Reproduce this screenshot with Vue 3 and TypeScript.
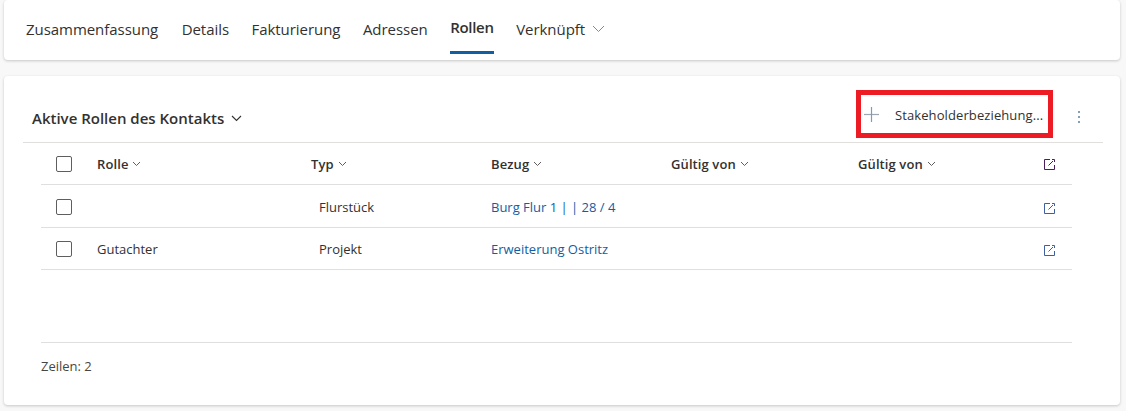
<template>
  <div class="page">
    <nav class="tabs card">
      <a v-for="tab in tabs" :key="tab" class="tab" :class="{ 'tab--active': tab === 'Rollen' }">
        {{ tab }}
        <svg v-if="tab === 'Verknüpft'" class="tab__chevron" width="13" height="8" viewBox="0 0 13 8">
          <path d="M1 1l5.5 5.5L12 1" fill="none" stroke="#6b8fb5" stroke-width="1" />
        </svg>
      </a>
    </nav>

    <section class="panel card">
      <header class="panel__head">
        <h2 class="panel__title">
          Aktive Rollen des Kontakts
          <svg width="11" height="7" viewBox="0 0 11 7">
            <path d="M1 1l4.5 4.5L10 1" fill="none" stroke="#323130" stroke-width="1.1" />
          </svg>
        </h2>
        <button class="add">
          <svg class="add__icon" width="15" height="15" viewBox="0 0 15 15">
            <path d="M0 7.5h15" fill="none" stroke="#a0a6ad" stroke-width="1.2" />
            <path d="M7.5 0v15" fill="none" stroke="#6f9fd0" stroke-width="1.2" />
          </svg>
          <span>Stakeholderbeziehung...</span>
        </button>
        <svg class="more" width="4" height="14" viewBox="0 0 4 14">
          <circle cx="2" cy="2" r="1" fill="#5c7f9f" />
          <circle cx="2" cy="7" r="1" fill="#5c7f9f" />
          <circle cx="2" cy="12" r="1" fill="#5c7f9f" />
        </svg>
      </header>

      <div class="table">
        <div class="row row--head">
          <span class="check"></span>
          <span v-for="col in columns" :key="col" class="col">
            {{ col }}
            <svg width="9" height="6" viewBox="0 0 9 6">
              <path d="M1 1l3.5 3.5L8 1" fill="none" stroke="#605e5c" stroke-width="1" />
            </svg>
          </span>
          <svg class="open" width="11" height="11" viewBox="0 0 11 11">
            <path d="M6 .5H.5v10h10V6M8 .5h2.5V3M9 2L4.5 6.5" fill="none" stroke="#4b1d5e" stroke-width="1" />
          </svg>
        </div>
        <div v-for="row in rows" :key="row.ref" class="row row--data">
          <span class="check"></span>
          <span>{{ row.role }}</span>
          <span class="type">{{ row.type }}</span>
          <a class="link">{{ row.ref }}</a>
          <span></span>
          <span></span>
          <svg class="open" width="11" height="11" viewBox="0 0 11 11">
            <path d="M6 .5H.5v10h10V6M8 .5h2.5V3M9 2L4.5 6.5" fill="none" stroke="#3f5f9f" stroke-width="1" />
          </svg>
        </div>
      </div>

      <footer class="panel__foot">Zeilen: 2</footer>
    </section>
  </div>
</template>

<script setup lang="ts">
const tabs = ["Zusammenfassung", "Details", "Fakturierung", "Adressen", "Rollen", "Verknüpft"];
const columns = ["Rolle", "Typ", "Bezug", "Gültig von", "Gültig von"];
const rows = [
  { role: "", type: "Flurstück", ref: "Burg Flur 1 | | 28 / 4" },
  { role: "Gutachter", type: "Projekt", ref: "Erweiterung Ostritz" },
];
</script>

<style>
body {
  background: #f8f8f8;
}
</style>

<style scoped>
.page {
  width: 1126px;
  height: 411px;
  overflow: hidden;
  padding: 0 6px 0 4px;
  box-sizing: border-box;
  background: #f8f8f8;
  font-family: "Open Sans", "Noto Sans", sans-serif;
  font-size: 13px;
  color: #323130;
}

.card {
  background: #fff;
  border-radius: 4px;
  box-shadow: 0 1px 3px rgba(0, 0, 0, 0.2);
}

.tabs {
  display: flex;
  height: 60px;
  padding-left: 22px;
  gap: 22.5px;
  box-sizing: border-box;
}

.tab {
  display: flex;
  align-items: center;
  gap: 7px;
  height: 54px;
  padding-top: 3px;
  box-sizing: border-box;
  font-size: 15px;
  letter-spacing: -0.05px;
  white-space: nowrap;
}

.tab:first-child {
  margin-right: 1px;
}

.tab--active {
  font-weight: 600;
  letter-spacing: -0.3px;
  border-bottom: 3px solid #115ea3;
}

.panel {
  height: 329px;
  margin-top: 16px;
  padding: 0 17px 0 19px;
  box-sizing: border-box;
}

.panel__head {
  display: flex;
  align-items: center;
  height: 66px;
  border-bottom: 1px solid #e1dfdd;
  padding: 0 0 0 9px;
}

.panel__title {
  margin: 18px auto 0 0;
  font-size: 15px;
  font-weight: 600;
  display: flex;
  align-items: center;
  gap: 7px;
}

.add {
  display: flex;
  flex: none;
  align-items: center;
  gap: 16px;
  width: 197px;
  height: 48px;
  margin-top: 10px;
  padding: 2px 0 0 3px;
  box-sizing: border-box;
  border: 5px solid #ed1c24;
  background: #fff;
  font: inherit;
  letter-spacing: 0.1px;
  color: #323130;
}

.add__icon {
  margin-bottom: 2px;
}

.more {
  flex: none;
  margin: 16px 22px 0 24px;
}

.table {
  margin: 0 31px 0 18px;
  height: 199px;
  border-bottom: 1px solid #e1dfdd;
}

.row {
  display: grid;
  grid-template-columns: 56px 214px 180px 180px 187px 185px 1fr;
  align-items: center;
  height: 42.5px;
  border-bottom: 1px solid #e1dfdd;
  box-sizing: border-box;
}

.row--head {
  height: 42px;
  font-weight: 600;
  letter-spacing: 0.1px;
}

.row--data {
  padding-top: 2px;
}

.col {
  display: flex;
  align-items: center;
  gap: 4px;
}

.check {
  width: 14px;
  height: 14px;
  margin-left: 15px;
  border: 1px solid #605e5c;
  border-radius: 2px;
}

.type {
  padding-left: 8px;
}

.link {
  color: #115ea3;
}

.open {
  margin: 2px 0 0 1px;
}

.row--data .open {
  margin-top: 3px;
}

.panel__foot {
  margin: 14px 0 0 18px;
  color: #484644;
}
</style>
